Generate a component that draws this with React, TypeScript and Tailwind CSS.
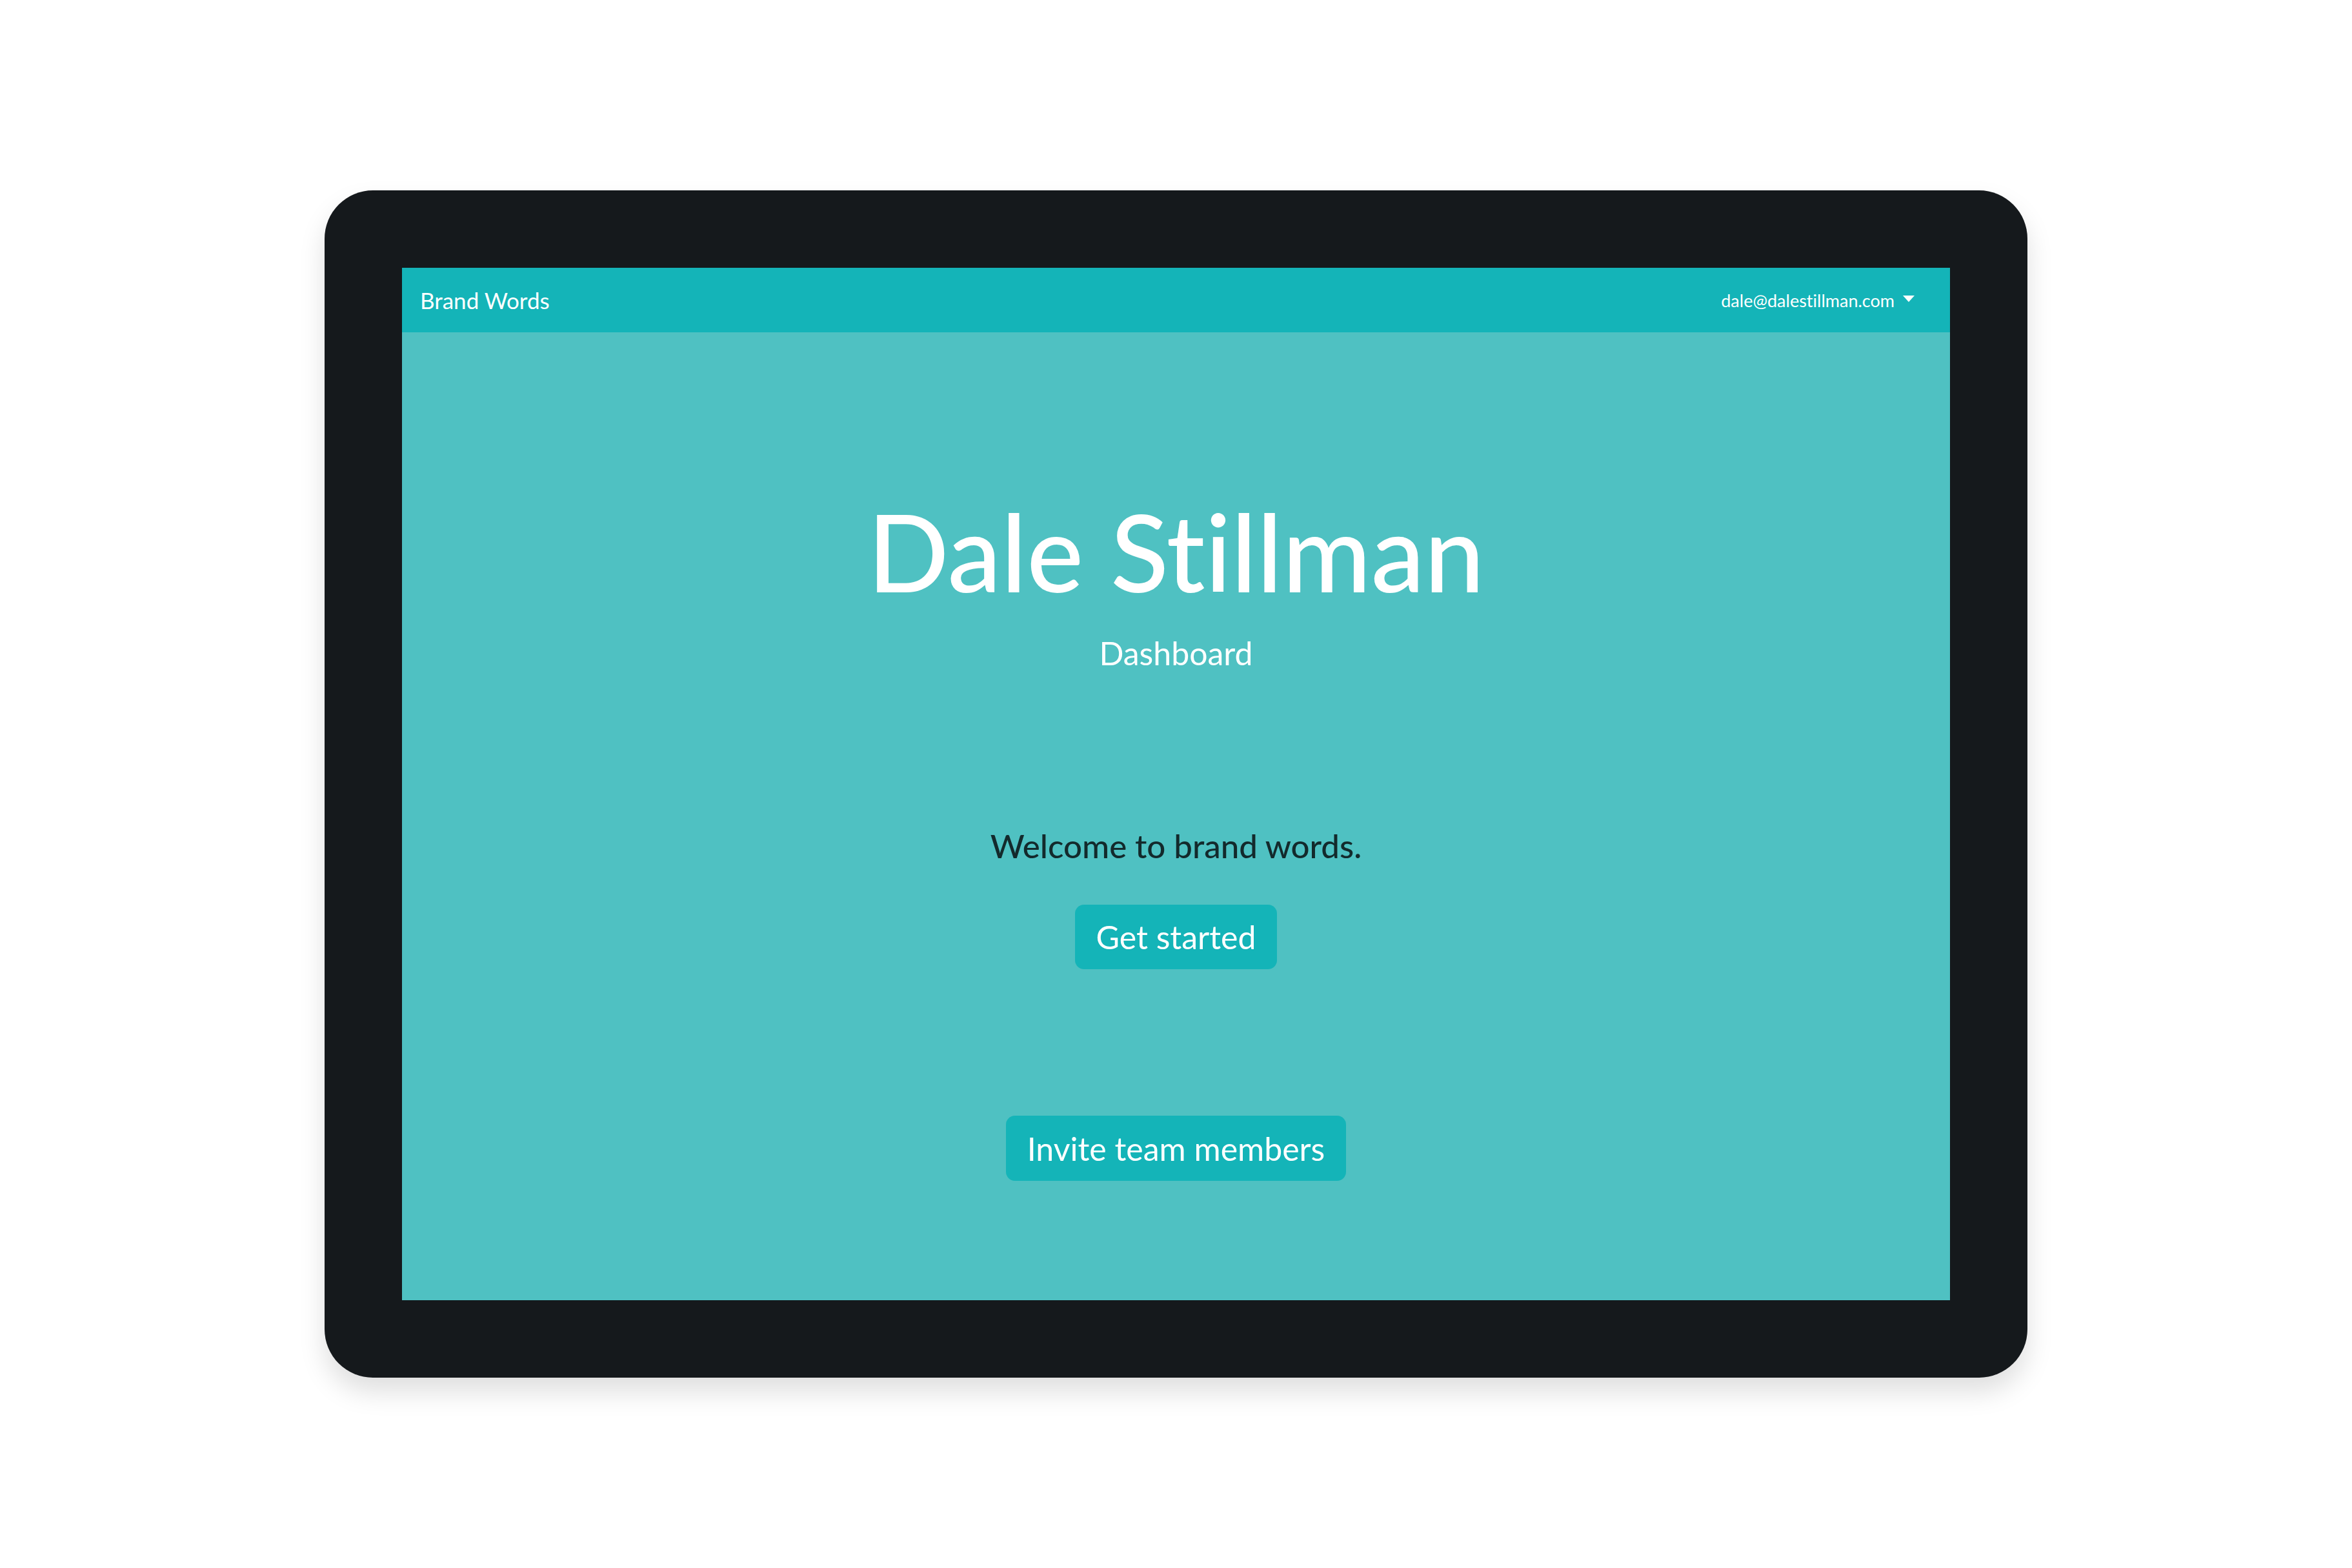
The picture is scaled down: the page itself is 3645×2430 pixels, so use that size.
export default function App() {
  return (
    <div className="flex h-[2430px] w-full items-center justify-center bg-white font-['Lato',sans-serif] [font-variant-ligatures:none]">
      {/* Device frame */}
      <div className="h-[1840px] w-[2639px] rounded-[75px] bg-[#15191c] p-[120px] shadow-[0_22px_40px_rgba(0,0,0,0.13)]">
        <div className="flex h-full w-full flex-col bg-[#4fc1c2]">
          {/* Navbar */}
          <nav className="flex h-[100px] shrink-0 items-center justify-between bg-[#14b4b8] pl-[28px] pr-[55px] text-white">
            <div className="text-[35px] leading-none">Brand Words</div>
            <div className="flex items-center gap-[13px] text-[27px] leading-none">
              <span>dale@dalestillman.com</span>
              <svg width="18" height="10" viewBox="0 0 18 10" className="mt-[-4px]">
                <path d="M0 0 H18 L9 10 Z" fill="#ffffff" />
              </svg>
            </div>
          </nav>

          {/* Dashboard content */}
          <main className="flex flex-col items-center">
            <h1 className="mt-[256px] text-[166px] font-medium leading-none text-white">
              Dale Stillman
            </h1>
            <div className="mt-[50px] text-[50px] leading-none text-white">Dashboard</div>

            <p className="mt-[248px] text-[51px] font-medium leading-none text-[#132a2c]">
              Welcome to brand words.
            </p>
            <button className="mt-[66px] flex h-[100px] items-center rounded-[14px] bg-[#14b4b8] px-[32px] text-[50px] leading-none text-white">
              Get started
            </button>

            <button className="mt-[227px] flex h-[101px] items-center rounded-[14px] bg-[#14b4b8] px-[33px] text-[50px] leading-none text-white">
              Invite team members
            </button>
          </main>
        </div>
      </div>
    </div>
  );
}
